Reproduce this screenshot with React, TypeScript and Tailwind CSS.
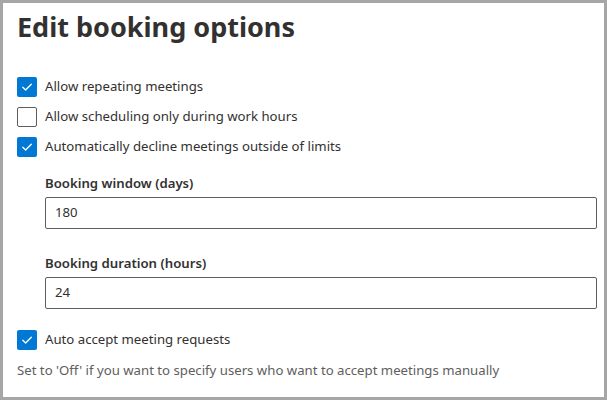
import React from "react";

const font = { fontFamily: '"Segoe UI", "Noto Sans", "Open Sans", sans-serif' };

function Check({ checked }: { checked: boolean }) {
  if (!checked) {
    return <span className="h-5 w-5 shrink-0 rounded-[2px] border border-[#605e5c] bg-white" />;
  }
  return (
    <span className="flex h-5 w-5 shrink-0 items-center justify-center rounded-[2px] bg-[#0078d4]">
      <svg width="12" height="12" viewBox="0 0 12 12" fill="none">
        <path d="M1.8 6.3 L4.6 9 L10.3 3.2" stroke="white" strokeWidth="1.3" strokeLinecap="round" strokeLinejoin="round" />
      </svg>
    </span>
  );
}

function CheckRow({ checked, label }: { checked: boolean; label: string }) {
  return (
    <label className="flex h-5 items-center gap-2 text-[13.2px] text-[#323130]">
      <Check checked={checked} />
      <span>{label}</span>
    </label>
  );
}

function Field({ label, value }: { label: string; value: string }) {
  return (
    <div className="flex flex-col">
      <span className="text-[13.2px] font-semibold leading-5 text-[#323130]">{label}</span>
      <div className="mt-[4px] flex h-8 items-center rounded-[2px] border border-[#605e5c] px-[9px] text-[13.2px] text-[#323130]">
        {value}
      </div>
    </div>
  );
}

export default function App() {
  return (
    <div style={font} className="h-[400px] w-[607px] border-[3px] border-[#a6a6a6] bg-white">
      <div className="pl-[14px] pr-[7px] pt-[8px]">
        <h1 className="text-[27px] font-bold leading-8 text-[#323130]">Edit booking options</h1>

        <div className="mt-[34px] flex flex-col gap-[10px]">
          <CheckRow checked label="Allow repeating meetings" />
          <CheckRow checked={false} label="Allow scheduling only during work hours" />
          <CheckRow checked label="Automatically decline meetings outside of limits" />
        </div>

        <div className="mt-[16px] flex flex-col gap-[24px] pl-[28px]">
          <Field label="Booking window (days)" value="180" />
          <Field label="Booking duration (hours)" value="24" />
        </div>

        <div className="mt-[21px]">
          <CheckRow checked label="Auto accept meeting requests" />
        </div>

        <p className="mt-[10px] text-[13.2px] leading-5 text-[#605e5c]">
          Set to 'Off' if you want to specify users who want to accept meetings manually
        </p>
      </div>
    </div>
  );
}
